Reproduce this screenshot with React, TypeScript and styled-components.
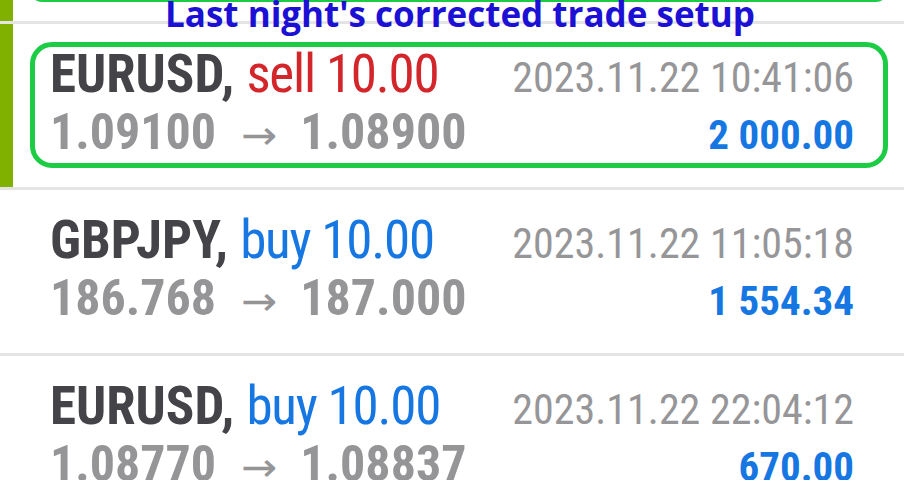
import styled, { createGlobalStyle } from 'styled-components';

interface ITrade {
   symbol: string;
   side: 'buy' | 'sell';
   volume: string;
   time: string;
   openPrice: string;
   closePrice: string;
   profit: string;
   highlighted?: boolean;
   marked?: boolean;
}

const trades: ITrade[] = [
   {
      symbol: 'EURUSD',
      side: 'sell',
      volume: '10.00',
      time: '2023.11.22 10:41:06',
      openPrice: '1.09100',
      closePrice: '1.08900',
      profit: '2 000.00',
      highlighted: true,
      marked: true,
   },
   {
      symbol: 'GBPJPY',
      side: 'buy',
      volume: '10.00',
      time: '2023.11.22 11:05:18',
      openPrice: '186.768',
      closePrice: '187.000',
      profit: '1 554.34',
   },
   {
      symbol: 'EURUSD',
      side: 'buy',
      volume: '10.00',
      time: '2023.11.22 22:04:12',
      openPrice: '1.08770',
      closePrice: '1.08837',
      profit: '670.00',
   },
];

const GlobalStyle = createGlobalStyle`
   html, body {
      margin: 0;
      padding: 0;
      background: #ffffff;
   }
   body {
      font-family: 'Roboto Condensed', 'Liberation Sans Narrow', 'Arial Narrow', 'DejaVu Sans Condensed', sans-serif;
   }
`;

const Page = styled.div`
   position: relative;
   width: 904px;
   height: 480px;
   overflow: hidden;
   background: #ffffff;
`;

const Caption = styled.div`
   position: absolute;
   top: -6px;
   left: 0;
   right: 0;
   text-align: center;
   font-family: 'Open Sans', 'Noto Sans', sans-serif;
   font-weight: 700;
   font-size: 35px;
   line-height: 40px;
   color: #1b10d4;
   padding-left: 16px;
`;

const Stub = styled.div`
   display: flex;
   height: 21px;
   overflow: hidden;
   border-bottom: 3px solid #e4e4e4;
`;

const Marker = styled.div<{ $on?: boolean }>`
   width: 13px;
   flex-shrink: 0;
   background: ${({ $on }) => ($on ? '#80b000' : 'transparent')};
`;

const FrameTail = styled.div`
   flex: 1;
   align-self: flex-start;
   height: 24px;
   margin: -22px 16px 0 17px;
   box-sizing: border-box;
   border: 5px solid #1ccc44;
   border-radius: 22px;
`;

const Row = styled.div`
   display: flex;
   height: 163px;
   border-bottom: 3px solid #e4e4e4;
`;

const Card = styled.div<{ $highlighted?: boolean }>`
   flex: 1;
   display: flex;
   flex-direction: column;
   justify-content: center;
   margin: 18px 16px 19px 17px;
   padding: 0 29px 0 15px;
   border: 5px solid ${({ $highlighted }) => ($highlighted ? '#1ccc44' : 'transparent')};
   border-radius: 22px;
`;

const Line = styled.div`
   display: flex;
   justify-content: space-between;
   align-items: baseline;
   white-space: nowrap;
`;

const Title = styled.div`
   font-size: 53px;
   line-height: 58px;
`;

const Symbol = styled.span`
   font-weight: 700;
   color: #434348;
`;

const Side = styled.span<{ $side: 'buy' | 'sell' }>`
   font-weight: 400;
   letter-spacing: -1.2px;
   color: ${({ $side }) => ($side === 'sell' ? '#d2262b' : '#1677e2')};
`;

const Time = styled.span`
   font-size: 42px;
   font-weight: 400;
   color: #969699;
`;

const Prices = styled.span`
   font-size: 50px;
   line-height: 58px;
   font-weight: 700;
   color: #959598;
`;

const Arrow = styled.span`
   display: inline-block;
   margin: 0 26px 0 28px;
   font-size: 40px;
   font-weight: 400;
   color: #959598;
   transform: scaleX(1.2);
`;

const Profit = styled.span`
   font-size: 41px;
   font-weight: 700;
   color: #1677e2;
`;

const App = () => {
   return (
      <Page>
         <GlobalStyle />
         <Stub>
            <Marker $on />
            <FrameTail />
         </Stub>
         {trades.map((trade, i) => (
            <Row key={i}>
               <Marker $on={trade.marked} />
               <Card $highlighted={trade.highlighted}>
                  <Line>
                     <Title>
                        <Symbol>{trade.symbol},</Symbol> <Side $side={trade.side}>{trade.side} {trade.volume}</Side>
                     </Title>
                     <Time>{trade.time}</Time>
                  </Line>
                  <Line>
                     <Prices>
                        {trade.openPrice}
                        <Arrow>→</Arrow>
                        {trade.closePrice}
                     </Prices>
                     <Profit>{trade.profit}</Profit>
                  </Line>
               </Card>
            </Row>
         ))}
         <Caption>Last night's corrected trade setup</Caption>
      </Page>
   );
};

export default App;
